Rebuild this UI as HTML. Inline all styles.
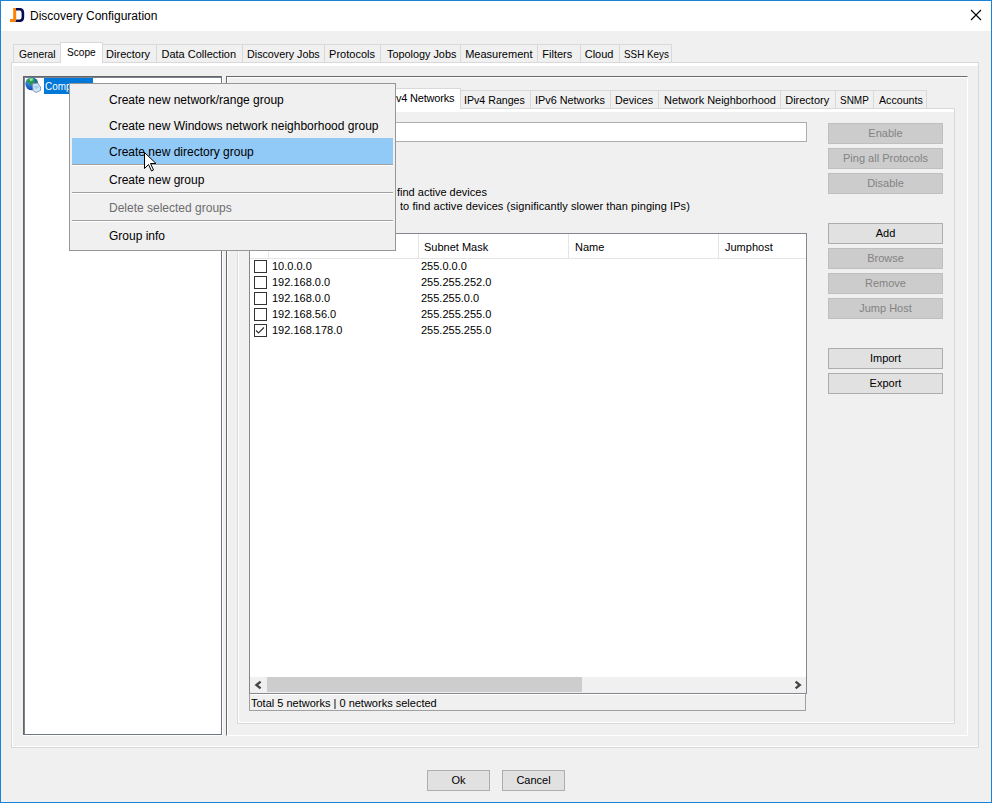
<!DOCTYPE html>
<html><head><meta charset="utf-8">
<style>
html,body{margin:0;padding:0;}
body{width:992px;height:803px;position:relative;overflow:hidden;background:#f0f0f0;font-family:"Liberation Sans",sans-serif;color:#000;}
.a{position:absolute;box-sizing:border-box;}
.t{position:absolute;white-space:pre;font-size:11px;line-height:13px;}
.t12{position:absolute;white-space:pre;font-size:12px;line-height:14px;}
.tab{position:absolute;box-sizing:border-box;border:1px solid #d9d9d9;border-bottom:none;background:#f0f0f0;}
.tabs{position:absolute;box-sizing:border-box;border:1px solid #d9d9d9;border-bottom:none;background:#fff;}
.btn{position:absolute;box-sizing:border-box;width:115px;height:21px;left:828px;border:1px solid #adadad;background:#e1e1e1;font-size:11px;line-height:19px;text-align:center;white-space:pre;}
.btn.d{background:#cccccc;border-color:#bfbfbf;color:#838383;}
.cb{position:absolute;box-sizing:border-box;width:13px;height:13px;left:254px;border:1px solid #333;background:#fff;}
</style></head><body>

<!-- window frame -->
<div class="a" style="left:0;top:0;width:992px;height:803px;border:1px solid #1883d7;"></div>
<div class="a" style="left:1px;top:1px;width:990px;height:30px;background:#fff;"></div>
<!-- logo -->
<svg class="a" style="left:9px;top:7px" width="17" height="17" viewBox="0 0 17 17">
  <path d="M4.2 1 H7.2 V12.5 L6 15 H1 V12 H4.2 Z" fill="#ff8000"/>
  <path d="M7 1 H11.5 Q15.2 1.5 15.2 6 V10 Q15.2 14.5 11.5 15 H6.2 L7.4 12.4 H11 Q12.6 12.2 12.6 10 V6 Q12.6 3.8 11 3.6 H7 Z" fill="#0a0a50"/>
</svg>
<div class="t12" style="left:30px;top:9px;">Discovery Configuration</div>
<svg class="a" style="left:970px;top:9px" width="12" height="12" viewBox="0 0 12 12">
  <path d="M1 1 L11 11 M11 1 L1 11" stroke="#000" stroke-width="1.1"/>
</svg>

<!-- outer tabbed pane -->
<div class="a" style="left:11px;top:62px;width:968px;height:686px;border:1px solid #d9d9d9;"></div>
<div class="a" style="left:12px;top:63px;width:966px;height:3px;background:#fff;"></div>
<div class="a" style="left:12px;top:63px;width:1px;height:684px;background:#fff;"></div>
<div class="a" style="left:12px;top:746px;width:966px;height:1px;background:#fff;"></div>

<div class="tab" style="left:13px;top:44px;width:48px;height:18px;"></div>
<div class="tab" style="left:102px;top:44px;width:55px;height:18px;"></div>
<div class="tab" style="left:156px;top:44px;width:87px;height:18px;"></div>
<div class="tab" style="left:242px;top:44px;width:83px;height:18px;"></div>
<div class="tab" style="left:324px;top:44px;width:57px;height:18px;"></div>
<div class="tab" style="left:380px;top:44px;width:81px;height:18px;"></div>
<div class="tab" style="left:460px;top:44px;width:78px;height:18px;"></div>
<div class="tab" style="left:537px;top:44px;width:44px;height:18px;"></div>
<div class="tab" style="left:580px;top:44px;width:40px;height:18px;"></div>
<div class="tab" style="left:619px;top:44px;width:53px;height:18px;"></div>
<div class="tabs" style="left:60px;top:42px;width:43px;height:21px;"></div>
<div class="t" style="left:67px;top:46px;transform:scaleX(0.92);transform-origin:0 0;">Scope</div>
<div class="t" style="left:18.5px;top:48px;transform:scaleX(0.936);transform-origin:0 0;">General</div>
<div class="t" style="left:106.1px;top:48px;">Directory</div>
<div class="t" style="left:161.5px;top:48px;">Data Collection</div>
<div class="t" style="left:247.2px;top:48px;transform:scaleX(0.975);transform-origin:0 0;">Discovery Jobs</div>
<div class="t" style="left:329.1px;top:48px;">Protocols</div>
<div class="t" style="left:386.5px;top:48px;transform:scaleX(0.986);transform-origin:0 0;">Topology Jobs</div>
<div class="t" style="left:465.2px;top:48px;">Measurement</div>
<div class="t" style="left:542.3px;top:48px;">Filters</div>
<div class="t" style="left:584.7px;top:48px;">Cloud</div>
<div class="t" style="left:623.5px;top:48px;transform:scaleX(0.896);transform-origin:0 0;">SSH Keys</div>

<!-- tree -->
<div class="a" style="left:23px;top:76px;width:200px;height:660px;border-right:1px solid #fff;border-bottom:1px solid #fff;"></div>
<div class="a" style="left:23px;top:76px;width:199px;height:659px;border:1px solid #6e7585;border-top-color:#646464;border-left-color:#646464;background:#fff;"></div>
<div class="a" style="left:24px;top:77px;width:197px;height:1px;background:#7a8190;"></div>
<div class="a" style="left:24px;top:77px;width:1px;height:657px;background:#7a8190;"></div>
<svg class="a" style="left:25px;top:77px" width="17" height="17" viewBox="0 0 17 17">
  <defs><radialGradient id="gl" cx="0.35" cy="0.3" r="0.8"><stop offset="0" stop-color="#3d9bff"/><stop offset="1" stop-color="#0b3d9e"/></radialGradient></defs>
  <circle cx="6.8" cy="6.8" r="6.5" fill="url(#gl)"/>
  <path d="M2 3.5 L4.5 1 L9.5 1 L9 3.5 L8.5 6.5 L8 9.5 L6 8.5 L4 6 L1.5 5.5 Z" fill="#2f9a4f"/>
  <path d="M4 1.5 L8 1.2 L7.5 3.5 L5.5 4 Z" fill="#9fec95"/>
  <path d="M10.5 2.5 L12.5 4 L11.5 6 L10 5 Z" fill="#1f7a3f"/>
  <path d="M7.5 7 L12.5 6 L15.5 10 L15.5 13.5 L11 15.5 L8 13.5 Z" fill="#c9e6fb" stroke="#8a93a8" stroke-width="0.9"/>
  <path d="M9 9 L13 8.5 L14 11 L10 12 Z" fill="#9fd0f5"/>
</svg>
<div class="a" style="left:44px;top:78px;width:49px;height:16px;background:#0078d7;"></div>
<div class="t" style="left:44.6px;top:80px;color:#fff;transform:scaleX(0.9);transform-origin:0 0;">Company</div>

<!-- right panel -->
<div class="a" style="left:226px;top:76px;width:742px;height:660px;border-top:1px solid #6a6a6a;border-left:1px solid #6a6a6a;border-right:1px solid #fff;border-bottom:1px solid #fff;"></div>
<div class="a" style="left:227px;top:77px;width:740px;height:1px;background:#fff;"></div>
<div class="a" style="left:227px;top:77px;width:1px;height:658px;background:#fff;"></div>

<!-- inner tabbed pane -->
<div class="a" style="left:237px;top:108px;width:718px;height:616px;border:1px solid #d9d9d9;"></div>
<div class="a" style="left:238px;top:109px;width:716px;height:3px;background:#fff;"></div>
<div class="a" style="left:238px;top:109px;width:1px;height:614px;background:#fff;"></div>
<div class="a" style="left:238px;top:722px;width:716px;height:1px;background:#fff;"></div>

<div class="tab" style="left:237px;top:90px;width:70px;height:18px;"></div>
<div class="tab" style="left:306px;top:90px;width:70px;height:18px;"></div>
<div class="tab" style="left:460px;top:90px;width:71px;height:18px;"></div>
<div class="tab" style="left:530px;top:90px;width:81px;height:18px;"></div>
<div class="tab" style="left:610px;top:90px;width:49px;height:18px;"></div>
<div class="tab" style="left:658px;top:90px;width:123px;height:18px;"></div>
<div class="tab" style="left:780px;top:90px;width:56px;height:18px;"></div>
<div class="tab" style="left:835px;top:90px;width:39px;height:18px;"></div>
<div class="tab" style="left:873px;top:90px;width:54px;height:18px;"></div>
<div class="tabs" style="left:375px;top:88px;width:86px;height:21px;"></div>
<div class="t" style="left:386px;top:92px;letter-spacing:-0.2px;">IPv4 Networks</div>
<div class="t" style="left:464.1px;top:94px;transform:scaleX(0.966);transform-origin:0 0;">IPv4 Ranges</div>
<div class="t" style="left:535.4px;top:94px;transform:scaleX(0.986);transform-origin:0 0;">IPv6 Networks</div>
<div class="t" style="left:615.2px;top:94px;transform:scaleX(0.974);transform-origin:0 0;">Devices</div>
<div class="t" style="left:663.5px;top:94px;transform:scaleX(0.995);transform-origin:0 0;">Network Neighborhood</div>
<div class="t" style="left:785.2px;top:94px;">Directory</div>
<div class="t" style="left:840.2px;top:94px;transform:scaleX(0.907);transform-origin:0 0;">SNMP</div>
<div class="t" style="left:879.4px;top:94px;transform:scaleX(0.969);transform-origin:0 0;">Accounts</div>

<!-- text field -->
<div class="a" style="left:250px;top:122px;width:557px;height:20px;border:1px solid #adadad;background:#fff;"></div>

<div class="t" style="left:397px;top:186px;">find active devices</div>
<div class="t" style="left:400px;top:200px;letter-spacing:0.06px;">to find active devices (significantly slower than pinging IPs)</div>

<!-- buttons -->
<div class="btn d" style="top:123px;">Enable</div>
<div class="btn d" style="top:148px;">Ping all Protocols</div>
<div class="btn d" style="top:173px;">Disable</div>
<div class="btn" style="top:223px;">Add</div>
<div class="btn d" style="top:248px;">Browse</div>
<div class="btn d" style="top:273px;">Remove</div>
<div class="btn d" style="top:298px;">Jump Host</div>
<div class="btn" style="top:348px;">Import</div>
<div class="btn" style="top:373px;">Export</div>

<!-- table -->
<div class="a" style="left:249px;top:233px;width:558px;height:461px;border:1px solid #828790;background:#fff;"></div>
<div class="a" style="left:250px;top:258px;width:556px;height:1px;background:#e5e5e5;"></div>
<div class="a" style="left:268px;top:234px;width:1px;height:24px;background:#e5e5e5;"></div>
<div class="a" style="left:418px;top:234px;width:1px;height:24px;background:#e5e5e5;"></div>
<div class="a" style="left:568px;top:234px;width:1px;height:24px;background:#e5e5e5;"></div>
<div class="a" style="left:718px;top:234px;width:1px;height:24px;background:#e5e5e5;"></div>
<div class="t" style="left:424px;top:241px;">Subnet Mask</div>
<div class="t" style="left:575px;top:241px;">Name</div>
<div class="t" style="left:725px;top:241px;">Jumphost</div>

<div class="cb" style="top:260px;"></div>
<div class="cb" style="top:276px;"></div>
<div class="cb" style="top:292px;"></div>
<div class="cb" style="top:308px;"></div>
<div class="cb" style="top:324px;"></div>
<svg class="a" style="left:254px;top:324px" width="13" height="13" viewBox="0 0 13 13"><path d="M2 6.5 L4.5 9 L10 3.5" stroke="#333" stroke-width="1.2" fill="none"/></svg>
<div class="t" style="left:272px;top:260px;">10.0.0.0</div>
<div class="t" style="left:272px;top:276px;">192.168.0.0</div>
<div class="t" style="left:272px;top:292px;">192.168.0.0</div>
<div class="t" style="left:272px;top:308px;">192.168.56.0</div>
<div class="t" style="left:272px;top:324px;">192.168.178.0</div>
<div class="t" style="left:421px;top:260px;">255.0.0.0</div>
<div class="t" style="left:421px;top:276px;">255.255.252.0</div>
<div class="t" style="left:421px;top:292px;">255.255.0.0</div>
<div class="t" style="left:421px;top:308px;">255.255.255.0</div>
<div class="t" style="left:421px;top:324px;">255.255.255.0</div>

<!-- h scrollbar -->
<div class="a" style="left:250px;top:677px;width:556px;height:16px;background:#f0f0f0;"></div>
<div class="a" style="left:267px;top:677px;width:315px;height:15px;background:#cdcdcd;"></div>
<svg class="a" style="left:253px;top:680px" width="10" height="10" viewBox="0 0 10 10"><path d="M7.6 1.6 L3.4 5 L7.6 8.4" stroke="#454545" stroke-width="2.3" fill="none"/></svg>
<svg class="a" style="left:793px;top:680px" width="10" height="10" viewBox="0 0 10 10"><path d="M2.6 1.6 L6.8 5 L2.6 8.4" stroke="#454545" stroke-width="2.3" fill="none"/></svg>

<!-- status -->
<div class="a" style="left:249px;top:693px;width:557px;height:18px;border:1px solid #a0a0a0;border-top:1px solid #828790;background:#f0f0f0;"></div>
<div class="a" style="left:250px;top:694px;width:555px;height:1px;background:#fff;"></div>
<div class="t" style="left:251px;top:697px;">Total 5 networks | 0 networks selected</div>

<!-- bottom buttons -->
<div class="a" style="left:427px;top:770px;width:63px;height:21px;border:1px solid #adadad;background:#e1e1e1;font-size:11px;line-height:19px;text-align:center;">Ok</div>
<div class="a" style="left:502px;top:770px;width:63px;height:21px;border:1px solid #adadad;background:#e1e1e1;font-size:11px;line-height:19px;text-align:center;">Cancel</div>

<!-- context menu -->
<div class="a" style="left:69px;top:83px;width:327px;height:168px;border:1px solid #979797;background:#f0f0f0;"></div>
<div class="a" style="left:72px;top:138px;width:321px;height:26px;background:#91c9f7;"></div>
<div class="a" style="left:72px;top:164px;width:321px;height:1px;background:#a0a0a0;"></div>
<div class="a" style="left:72px;top:165px;width:321px;height:1px;background:#fff;"></div>
<div class="a" style="left:72px;top:192px;width:321px;height:1px;background:#a0a0a0;"></div>
<div class="a" style="left:72px;top:193px;width:321px;height:1px;background:#fff;"></div>
<div class="a" style="left:72px;top:220px;width:321px;height:1px;background:#a0a0a0;"></div>
<div class="a" style="left:72px;top:221px;width:321px;height:1px;background:#fff;"></div>
<div class="t12" style="left:109px;top:93px;">Create new network/range group</div>
<div class="t12" style="left:109px;top:119px;">Create new Windows network neighborhood group</div>
<div class="t12" style="left:109px;top:145px;">Create new directory group</div>
<div class="t12" style="left:109px;top:173px;">Create new group</div>
<div class="t12" style="left:109px;top:201px;color:#6d6d6d;">Delete selected groups</div>
<div class="t12" style="left:109px;top:229px;">Group info</div>

<!-- cursor -->
<svg class="a" style="left:143px;top:151px" width="15" height="22" viewBox="0 0 15 22">
  <path d="M1.5 1.5 L1.5 17.5 L5.5 13.5 L8.5 20 L10.5 19 L7.5 12.5 L13 12.5 Z" fill="#fff" stroke="#000" stroke-width="1" stroke-linejoin="miter"/>
</svg>

</body></html>
